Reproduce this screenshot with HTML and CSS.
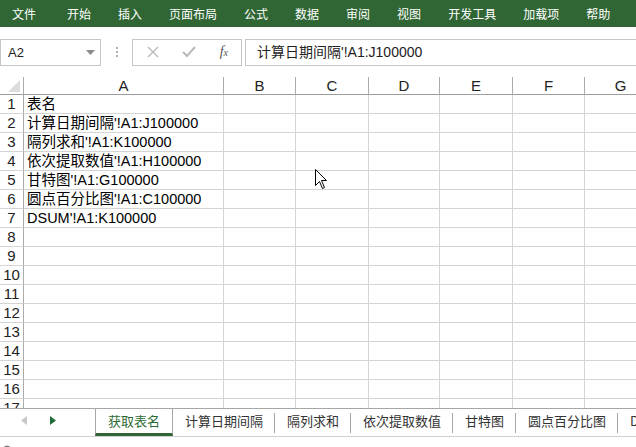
FILE: index.html
```html
<!DOCTYPE html>
<html lang="zh-CN">
<head>
<meta charset="UTF-8">
<title>获取表名 - Excel</title>
<link rel="stylesheet" href="styles.css">
</head>
<body>
<div class="ribbon-tabs">
<span class="menu first">文件</span>
<span class="menu">开始</span>
<span class="menu">插入</span>
<span class="menu">页面布局</span>
<span class="menu">公式</span>
<span class="menu">数据</span>
<span class="menu">审阅</span>
<span class="menu">视图</span>
<span class="menu">开发工具</span>
<span class="menu">加载项</span>
<span class="menu">帮助</span>
</div>

<div class="formula-bar">
<div class="name-box">
<span>A2</span>
<svg width="9" height="5" viewBox="0 0 9 5"><path d="M0 0H9L4.5 5Z" fill="#8a8a8a"/></svg>
</div>
<div class="grip"><i></i><i></i><i></i></div>
<div class="fx-buttons">
<svg width="12" height="12" viewBox="0 0 12 12"><path d="M1 1L11 11M11 1L1 11" stroke="#b9b9b9" stroke-width="1.4"/></svg>
<svg width="14" height="12" viewBox="0 0 14 12"><path d="M1 6L5 10L13 1" stroke="#b9b9b9" stroke-width="2" fill="none"/></svg>
<span class="fx">f<sub>x</sub></span>
</div>
<div class="formula-input">计算日期间隔'!A1:J100000</div>
</div>

<div class="sheet" id="sheet"></div>

<div class="sheet-tabs">
<div class="scroll-arrows">
<svg width="6" height="9" viewBox="0 0 6 9"><path d="M6 0V9L0 4.5Z" fill="#c8c8c8"/></svg>
<svg width="6" height="9" viewBox="0 0 6 9"><path d="M0 0V9L6 4.5Z" fill="#1f6b3a"/></svg>
</div>
<div class="tab active">获取表名</div>
<div class="tab">计算日期间隔</div>
<div class="tab">隔列求和</div>
<div class="tab">依次提取数值</div>
<div class="tab">甘特图</div>
<div class="tab">圆点百分比图</div>
<div class="tab">DSUM</div>
</div>

<div class="status-bar">
<svg width="16" height="9" viewBox="0 0 16 9"><circle cx="4" cy="4" r="3.5" fill="#7a7a7a"/><rect x="8" y="2" width="7" height="4" fill="#6a6a6a"/><rect x="9" y="7" width="1.5" height="1.5" fill="#6a6a6a"/><rect x="12" y="7" width="1.5" height="1.5" fill="#6a6a6a"/></svg>
</div>

<svg class="pointer" width="13" height="21" viewBox="0 0 13 21">
<path d="M0.5 0.5V16.5L4.5 12.5L7.5 19.5L9.5 18.5L6.5 11.5H11.5Z" fill="#fff" stroke="#000" stroke-width="1"/>
</svg>

<script>
// cell values in column A, everything else is empty
var values = [
    "表名",
    "计算日期间隔'!A1:J100000",
    "隔列求和'!A1:K100000",
    "依次提取数值'!A1:H100000",
    "甘特图'!A1:G100000",
    "圆点百分比图'!A1:C100000",
    "DSUM'!A1:K100000"
];
var cols = ["A", "B", "C", "D", "E", "F", "G"];

function cell(cls, text) {
    var d = document.createElement("div");
    d.className = cls;
    d.textContent = text || "";
    return d;
}

function buildSheet() {
    var sheet = document.getElementById("sheet");
    sheet.appendChild(cell("corner"));
    cols.forEach(c => sheet.appendChild(cell("col-head", c)));
    for (let r = 1; r <= 17; r++) {
        sheet.appendChild(cell("row-head", r));
        cols.forEach((c, i) => {
            sheet.appendChild(cell("cell", i === 0 ? values[r - 1] : ""));
        });
    }
}

buildSheet();
</script>
</body>
</html>
```

FILE: styles.css
```css
body {
    margin: 0;
    width: 636px;
    height: 447px;
    overflow: hidden;
    background: #fff;
    font-family: "Liberation Sans", "Noto Sans CJK SC", sans-serif;
    position: relative;
}

/* ribbon tabs */
.ribbon-tabs {
    height: 27px;
    background: #306634;
    display: flex;
    align-items: center;
    gap: 27px;
    padding-left: 12px;
    font-family: "Noto Sans CJK SC", sans-serif;
    font-size: 12px;
    color: #fff;
}
.ribbon-tabs .first {
    margin-right: 4px;
}

/* formula bar */
.formula-bar {
    height: 50px;
    display: flex;
    align-items: center;
}
.name-box {
    width: 101px;
    height: 27px;
    box-sizing: border-box;
    border: 1px solid #c6c6c6;
    display: flex;
    align-items: center;
    justify-content: space-between;
    padding: 0 5px 0 7px;
    font-size: 13px;
    color: #222;
}
.grip {
    width: 31px;
    display: flex;
    flex-direction: column;
    align-items: center;
    gap: 2px;
}
.grip i {
    width: 2px;
    height: 2px;
    background: #b0b0b0;
}
.fx-buttons {
    width: 110px;
    height: 27px;
    box-sizing: border-box;
    border: 1px solid #c6c6c6;
    display: flex;
    align-items: center;
    justify-content: space-between;
    padding: 0 13px 0 14px;
}
.fx {
    font-family: "Liberation Serif", serif;
    font-style: italic;
    font-size: 14px;
    color: #555;
}
.fx sub {
    font-size: 10px;
    vertical-align: 0;
}
.formula-input {
    flex: 1;
    height: 27px;
    margin-left: 3px;
    box-sizing: border-box;
    border: 1px solid #c6c6c6;
    border-right: none;
    padding-left: 11px;
    line-height: 25px;
    font-size: 14px;
    color: #222;
}

/* worksheet grid */
.sheet {
    height: 331px;
    overflow: hidden;
    display: grid;
    grid-template-columns: 24px 200px 72px 73px 71px 73px 72px 72px;
    grid-template-rows: 18px;
    grid-auto-rows: 19px;
    font-size: 14.5px;
    color: #000;
}
.sheet > div {
    box-sizing: border-box;
    border-right: 1px solid #d4d4d4;
    border-bottom: 1px solid #d4d4d4;
    white-space: nowrap;
    overflow: hidden;
}
.sheet .corner {
    position: relative;
    border-right-color: #ababab;
    border-bottom-color: #9c9c9c;
}
.corner::after {
    content: "";
    position: absolute;
    right: 3px;
    bottom: 2px;
    border-left: 12px solid transparent;
    border-bottom: 12px solid #dcdcdc;
}
.sheet .col-head {
    text-align: center;
    line-height: 18px;
    font-size: 15px;
    color: #222;
    border-right-color: #ababab;
    border-bottom-color: #9c9c9c;
}
.sheet .row-head {
    text-align: center;
    line-height: 18px;
    font-size: 15px;
    color: #222;
    border-right-color: #ababab;
}
.sheet .cell {
    padding-left: 3px;
    line-height: 18px;
}

/* sheet tabs */
.sheet-tabs {
    height: 29px;
    box-sizing: border-box;
    border-top: 1px solid #a6a6a6;
    border-bottom: 1px solid #d0d0d0;
    display: flex;
    font-family: "Noto Sans CJK SC", sans-serif;
    font-size: 13px;
    color: #333;
    white-space: nowrap;
}
.scroll-arrows {
    width: 95px;
    flex: none;
    display: flex;
    align-items: center;
    gap: 23px;
    padding-left: 21px;
    box-sizing: border-box;
    padding-bottom: 4px;
}
.tab {
    position: relative;
    height: 24px;
    line-height: 24px;
    padding: 0 12px 0 12px;
    flex: none;
}
.tab::after {
    content: "";
    position: absolute;
    right: 0;
    top: 4px;
    bottom: 0;
    width: 1px;
    background: #a6a6a6;
}
.tab.active {
    color: #2d6b35;
    padding: 0 12px;
    border-left: 1px solid #a6a6a6;
    border-right: 1px solid #a6a6a6;
    border-bottom: 3px solid #306634;
}
.tab.active::after {
    display: none;
}

/* status bar */
.status-bar {
    height: 10px;
    padding: 3px 0 0 3px;
}

.pointer {
    position: absolute;
    left: 315px;
    top: 169px;
}
```
